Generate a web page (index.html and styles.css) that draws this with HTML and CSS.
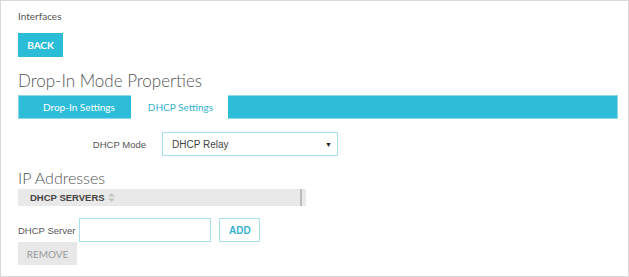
FILE: index.html
```html
<!DOCTYPE html>
<html lang="en">
<head>
  <meta charset="UTF-8">
  <title>Drop-In Mode Properties</title>
  <link rel="stylesheet" href="styles.css">
</head>
<body>
  <div class="page">
    <div class="crumb">Interfaces</div>
    <button class="btn-back">BACK</button>

    <h1 class="title">Drop-In Mode Properties</h1>

    <div class="tabs">
      <div class="tab">Drop-In Settings</div>
      <div class="tab active">DHCP Settings</div>
    </div>

    <!-- dhcp mode -->
    <div class="form-row">
      <label class="form-label">DHCP Mode</label>
      <div class="select">
        <span>DHCP Relay</span>
        <span class="caret">&#9660;</span>
      </div>
    </div>

    <h2 class="section">IP Addresses</h2>
    <div class="grid-head">
      <div class="col">DHCP SERVERS
        <svg class="sort" width="7" height="9" viewBox="0 0 7 9"><path d="M3.5 0 L7 3.6 L0 3.6 Z M0 5.4 L7 5.4 L3.5 9 Z" fill="#c4c4c4"/></svg>
      </div>
      <div class="gutter"></div>
    </div>

    <div class="server-row">
      <label class="server-label">DHCP Server</label>
      <input class="server-input" type="text">
      <button class="btn-add">ADD</button>
    </div>
    <button class="btn-remove">REMOVE</button>
  </div>
</body>
</html>
```

FILE: styles.css
```css
html, body {
  margin: 0;
  padding: 0;
  height: 100%;
}

body {
  box-sizing: border-box;
  border: 1px solid #d9d9d9;
  background: #fff;
  color: #555;
  font-family: Lato, "Open Sans", sans-serif;
}

.page { padding: 8px 10px 0 17px; }

.crumb {
  font-size: 10px;
  line-height: 14px;
  color: #555;
}

button {
  font-family: Lato, "Open Sans", sans-serif;
  cursor: pointer;
  border-radius: 0;
}

.btn-back {
  display: block;
  margin-top: 10px;
  height: 24px;
  width: 45px;
  padding: 0;
  border: 0;
  background: #2bbcd8;
  color: #fff;
  font-size: 10px;
  font-weight: 700;
}

.title {
  margin: 14px 0 0;
  font-size: 17px;
  font-weight: 300;
  line-height: 20px;
  color: #555;
}

.tabs {
  display: flex;
  margin-top: 4px;
  height: 24px;
  padding-left: 6px;
  background: #2dbdd9;
  border: 1px solid #8fd9ea;
  box-sizing: border-box;
}
.tab {
  padding: 0 16px 0 18px;
  font-size: 10px;
  line-height: 22px;
  color: #fff;
}
.tab.active {
  padding: 0 15px 0 17px;
  background: #fff;
  color: #39b3cf;
  margin-top: -1px;
  margin-bottom: -1px;
  line-height: 24px;
}

.form-row {
  display: flex;
  align-items: center;
  margin-top: 13px;
}
.form-label {
  width: 128px;
  text-align: right;
  margin-right: 16px;
  font-family: "Liberation Sans", Arial, sans-serif;
  font-size: 9.5px;
  color: #555;
}
.select {
  display: flex;
  justify-content: space-between;
  align-items: center;
  box-sizing: border-box;
  width: 176px;
  height: 24px;
  padding: 0 5px 0 9px;
  border: 1px solid #a9e1ee;
  font-family: "Liberation Sans", Arial, sans-serif;
  font-size: 10px;
  color: #444;
}
.caret { font-size: 7px; color: #222; }

.section {
  margin: 12px 0 0;
  font-size: 16px;
  font-weight: 300;
  line-height: 20px;
  color: #555;
}

.grid-head {
  display: flex;
  width: 288px;
  height: 17px;
  margin-top: 1px;
  background: #e9e9e9;
}
.col {
  flex: 1;
  padding-left: 12px;
  font-family: "Liberation Sans", Arial, sans-serif;
  font-size: 9.5px;
  font-weight: 700;
  line-height: 17px;
  color: #444;
}
.sort { vertical-align: -1px; margin-left: 1px; }
.gutter {
  width: 2px;
  margin-right: 4px;
  background: #bdbdbd;
}

.server-row {
  display: flex;
  align-items: center;
  margin-top: 12px;
}
.server-label {
  font-family: "Liberation Sans", Arial, sans-serif;
  font-size: 9.5px;
  color: #555;
  margin-right: 4px;
}
.server-input {
  box-sizing: border-box;
  width: 132px;
  height: 24px;
  margin: 0;
  border: 1px solid #a9e1ee;
  outline: none;
}
.btn-add {
  margin-left: 8px;
  width: 41px;
  height: 24px;
  padding: 0;
  border: 1px solid #a9e1ee;
  background: #fff;
  color: #39b3cf;
  font-family: "Liberation Sans", Arial, sans-serif;
  font-size: 10px;
  font-weight: 700;
}

.btn-remove {
  display: block;
  width: 59px;
  height: 23px;
  padding: 0;
  border: 0;
  background: #e8e8e8;
  color: #999;
  font-size: 10px;
}
```
